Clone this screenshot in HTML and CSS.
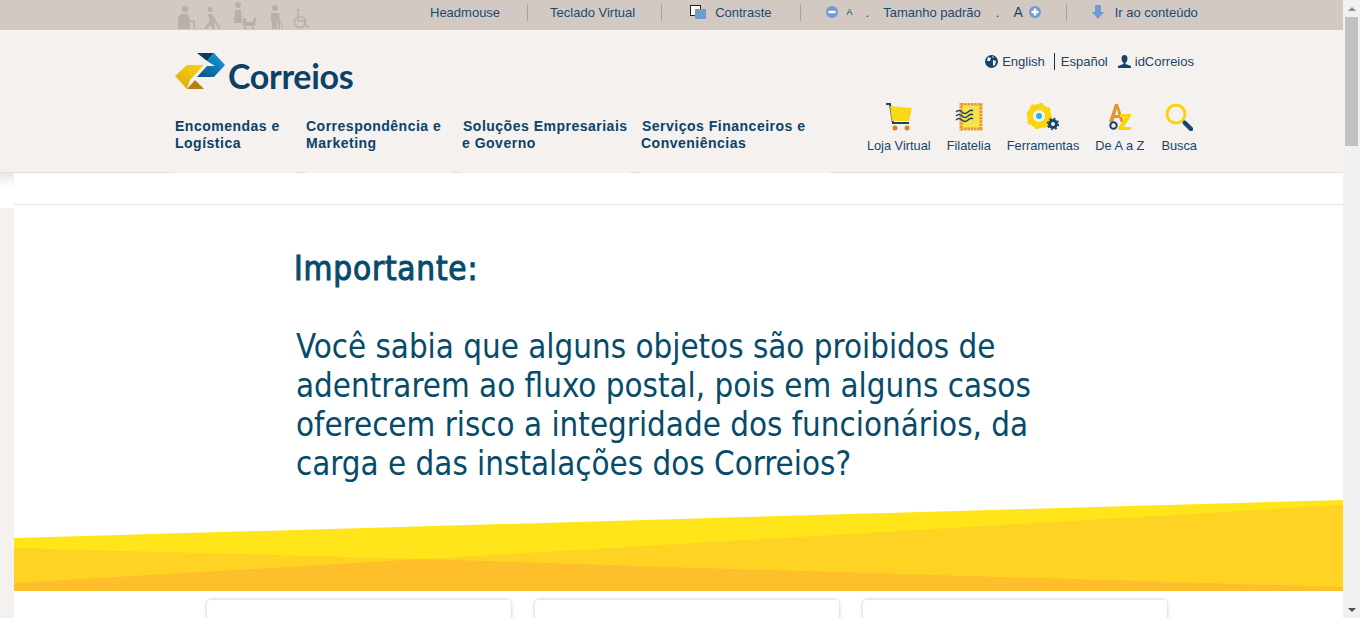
FILE: index.html
```html
<!DOCTYPE html>
<html lang="pt-BR">

<head>
    <meta charset="utf-8">
    <title>Correios</title>
    <link rel="stylesheet" href="styles.css">
</head>

<body>
    <div id="page">
        <div class="access-bar">
            <div class="access-people">
                <svg width="136" height="30" viewBox="0 0 136 30" fill="#b9b0a9">
                    <circle cx="9" cy="9" r="3.2"/>
                    <path d="M2 29v-9q0-6 6-6.500 5 0 5.500 5l1 2h4l1 8.500h-1.500l-1-7h-3v7z"/>
                    <circle cx="34" cy="9.500" r="2.500"/>
                    <path d="M32 14h4l9 15h-2l-5-7.500 1 7.500h-3l-1.500-4-3.500 4h-3l5.500-8z"/>
                    <circle cx="62" cy="5" r="3"/>
                    <path d="M59 10h6l1 13h-8z"/>
                    <path d="M67 18h3v4h7q1-6 3-4l-1 8h-12z"/>
                    <circle cx="69" cy="28" r="1.500"/>
                    <circle cx="77" cy="28" r="1.500"/>
                    <circle cx="99" cy="8" r="3"/>
                    <path d="M95 13h8l1 8v8h-2v-7h-1v7h-5v-7h-1v-1z"/>
                    <path d="M104 20h1l2 9h-1z"/>
                    <g fill="none" stroke="#b9b0a9" stroke-width="1.600">
                        <circle cx="124" cy="22" r="5.500"/>
                        <path d="M122 12v9h6l3 6h2"/>
                    </g>
                    <circle cx="122" cy="10" r="1.600"/>
                </svg>
            </div>
            <a class="access-link">Headmouse</a>
            <span class="sep sep-a"></span>
            <a class="access-link">Teclado Virtual</a>
            <span class="sep sep-b"></span>
            <span class="contrast-icon"></span>
            <a class="access-link">Contraste</a>
            <span class="sep sep-c"></span>
            <svg class="round-icon" width="12" height="12" viewBox="0 0 12 12">
                <circle cx="6" cy="6" r="6" fill="#6f9bd1"/>
                <rect x="2.500" y="4.800" width="7" height="2.400" fill="#fff"/>
            </svg>
            <span class="font-small">A</span>
            <span class="font-dot">.</span>
            <a class="access-link">Tamanho padrão</a>
            <span class="font-dot dot-b">.</span>
            <span class="font-big">A</span>
            <svg class="round-icon" width="12" height="12" viewBox="0 0 12 12">
                <circle cx="6" cy="6" r="6" fill="#6f9bd1"/>
                <path d="M2.500 4.800h2.300v-2.300h2.400v2.300h2.300v2.400h-2.300v2.300h-2.400v-2.300h-2.300z" fill="#fff"/>
            </svg>
            <span class="sep sep-d"></span>
            <svg class="skip-icon" width="12" height="14" viewBox="0 0 12 14">
                <path d="M3 0h6v7h3l-6 7-6-7h3z" fill="#6f9bd1"/>
            </svg>
            <a class="access-link">Ir ao conteúdo</a>
        </div>

        <header class="site-header">
            <div class="header-top">
                <div class="logo">
                    <svg width="52" height="38" viewBox="0 0 52 38">
                        <defs>
                            <linearGradient id="lg-blue" x1="0" y1="1" x2="1" y2="0">
                                <stop offset="0" stop-color="#0a4f7f"/>
                                <stop offset="1" stop-color="#12a5e4"/>
                            </linearGradient>
                            <linearGradient id="lg-gold" x1="0" y1="1" x2="1" y2="0">
                                <stop offset="0" stop-color="#dca60f"/>
                                <stop offset="1" stop-color="#fbd80a"/>
                            </linearGradient>
                        </defs>
                        <path d="M22 0h17l-7 8z" fill="#0b3c66"/>
                        <path d="M39 0l11 12-11 12H22l10-11h8l-8-5z" fill="url(#lg-blue)"/>
                        <path d="M0 23L12 12H29L15 27l-3 9z" fill="url(#lg-gold)"/>
                        <path d="M20 27l9 9H12z" fill="#b97d17"/>
                    </svg>
                    <span class="logo-word">Correios</span>
                </div>
                <div class="lang-links">
                    <svg width="13" height="13" viewBox="0 0 13 13">
                        <circle cx="6.500" cy="6.500" r="6.500" fill="#16456b"/>
                        <path d="M3 2l3 1-1 3-3 0zM8 5l3 1-1 4-2 1zM7 1l2 1-1 1z" fill="#f5f1ee"/>
                    </svg>
                    <a class="lang-text">English</a>
                    <span class="lang-sep"></span>
                    <a class="lang-text">Español</a>
                    <svg class="user-icon" width="13" height="13" viewBox="0 0 13 13">
                        <path d="M6.500 0q3 0 3 3.500t-2 4.500v1l5.500 2v2h-13v-2l5.500-2v-1q-2-1-2-4.500t3-3.500z" fill="#16456b"/>
                    </svg>
                    <a class="lang-text">idCorreios</a>
                </div>
            </div>
            <div class="header-bottom">
                <nav class="main-nav">
                    <a class="nav-item nav-1">Encomendas e<br>Logística</a>
                    <a class="nav-item nav-2">Correspondência e<br>Marketing</a>
                    <a class="nav-item nav-3"><span class="nudge">Soluções Empresariais</span><br>e Governo</a>
                    <a class="nav-item nav-4"><span class="nudge">Serviços Financeiros e</span><br>Conveniências</a>
                </nav>
                <div class="tools">
                    <a class="tool">
                        <svg width="28" height="28" viewBox="0 0 28 28">
                            <path d="M1 1h4l3 19h16" fill="none" stroke="#16456b" stroke-width="2"/>
                            <path d="M5 3l22 2-3 13-17 0z" fill="#fbd716"/>
                            <circle cx="10" cy="25" r="2.500" fill="#de7f27"/>
                            <circle cx="22" cy="25" r="2.500" fill="#de7f27"/>
                        </svg>
                        <span>Loja Virtual</span>
                    </a>
                    <a class="tool">
                        <svg width="28" height="28" viewBox="0 0 28 28">
                            <rect x="6" y="1" width="20" height="25" fill="#fbe04a" stroke="#e39a2e" stroke-width="3" stroke-dasharray="2.500 .8"/>
                            <path d="M1 9q3-3 6 0t6 0 5-1M1 13q3-3 6 0t6 0 5-1M1 17q3-3 6 0t6 0 5-1" fill="none" stroke="#16456b" stroke-width="1.500"/>
                        </svg>
                        <span>Filatelia</span>
                    </a>
                    <a class="tool">
                        <svg width="32" height="28" viewBox="0 0 32 28">
                            <circle cx="12" cy="13" r="9" fill="none" stroke="#fbd30f" stroke-width="6"/>
                            <circle cx="12" cy="13" r="12" fill="none" stroke="#fbd30f" stroke-width="2.500" stroke-dasharray="4 5.400"/>
                            <circle cx="12" cy="13" r="3" fill="#22b5ea"/>
                            <circle cx="26" cy="21" r="3.500" fill="none" stroke="#16456b" stroke-width="3"/>
                            <circle cx="26" cy="21" r="5.500" fill="none" stroke="#16456b" stroke-width="1.500" stroke-dasharray="2 2.300"/>
                        </svg>
                        <span>Ferramentas</span>
                    </a>
                    <a class="tool">
                        <svg width="28" height="28" viewBox="0 0 28 28">
                            <path d="M3 19L9 1h3l6 18h-3.500l-1.200-4h-5l-1.200 4zM9.200 12h3.300L10.800 6z" fill="#de9630"/>
                            <path d="M14 11h11v2l-7 11h7v3H12v-2l7-11h-5z" fill="#fbd30f"/>
                            <circle cx="7.500" cy="22.500" r="3.200" fill="none" stroke="#16456b" stroke-width="2"/>
                        </svg>
                        <span>De A a Z</span>
                    </a>
                    <a class="tool tool-last">
                        <svg width="28" height="28" viewBox="0 0 28 28">
                            <circle cx="11" cy="11" r="9" fill="none" stroke="#fbd30f" stroke-width="3"/>
                            <path d="M18 18l2 2" stroke="#22b5ea" stroke-width="3"/>
                            <path d="M20 20l6 6" stroke="#16456b" stroke-width="4.500" stroke-linecap="round"/>
                        </svg>
                        <span>Busca</span>
                    </a>
                </div>
            </div>
        </header>

        <div class="under-header">
            <div class="under-strip"></div>
            <div class="under-main"></div>
        </div>

        <div class="content-wrap">
            <main class="content">
                <h1>Importante:</h1>
                <p>Você sabia que alguns objetos são proibidos de<br>adentrarem ao fluxo postal, pois em alguns casos<br>oferecem risco a integridade dos funcionários, da<br>carga e das instalações dos Correios?</p>

                <svg class="band" width="1329" height="92" viewBox="0 0 1329 92" preserveAspectRatio="none">
                    <polygon points="0,38 1329,0 1329,91 0,91" fill="#ffe51a"/>
                    <polygon points="0,48 410,59 1329,5 1329,91 0,91" fill="#ffd324"/>
                    <polygon points="0,83 410,59 686,68 1329,87 1329,91 0,91" fill="#ffbf2a"/>
                </svg>

                <div class="cards">
                    <div class="card"></div>
                    <div class="card"></div>
                    <div class="card"></div>
                </div>
            </main>
        </div>
    </div>

    <div class="scrollbar">
        <span class="arrow-up"></span>
        <span class="thumb"></span>
        <span class="arrow-down"></span>
    </div>
</body>

</html>
```
FILE: styles.css
```css
html,
body {
    margin: 0;
    padding: 0;
    height: 100%;
    overflow: hidden;
}

body {
    display: flex;
    font-family: "Liberation Sans", Arial, sans-serif;
    font-size: 13px;
    color: #16456b;
    background: #f5f1ee;
}

#page {
    flex: 1;
    min-width: 0;
    display: flex;
    flex-direction: column;
}

.access-bar {
    height: 30px;
    flex: none;
    box-sizing: border-box;
    padding: 0 0 6px 176px;
    display: flex;
    align-items: center;
    background: #d2c9c3;
    white-space: nowrap;
}

.access-people {
    height: 30px;
    width: 136px;
    margin-right: 118px;
    align-self: flex-start;

    & svg {
        display: block;
    }
}

.access-link {
    color: #1b4a70;
}

.sep {
    width: 1px;
    height: 17px;
    background: #aaa39d;
}

.sep-a {
    margin: 0 22px 0 27px;
}

.sep-b {
    margin: 0 28px 0 26px;
}

.sep-c {
    margin: 0 25px 0 28px;
}

.sep-d {
    margin: 0 25px;
}

.contrast-icon {
    width: 16px;
    height: 14px;
    margin-right: 9px;
    background:
        linear-gradient(#6f9bd1, #6f9bd1) 5px 4px / 11px 10px no-repeat,
        linear-gradient(#fff, #fff) 1px 1px / 9px 9px no-repeat,
        linear-gradient(#222, #222) 0 0 / 11px 11px no-repeat;
}

.font-small {
    font-size: 9px;
    margin: 0 0 0 9px;
}

.font-dot {
    margin: 0 14px 0 13px;
}

.dot-b {
    margin: 0 14px 0 15px;
}

.font-big {
    font-size: 14px;
    margin-right: 6px;
}

.skip-icon {
    margin-right: 11px;
}

.site-header {
    height: 143px;
    flex: none;
    box-sizing: border-box;
    padding: 0 146px 0 175px;
    display: flex;
    flex-direction: column;
    background: #f5f1ee;
    border-bottom: 1px solid #e0e0e0;
}

.header-top {
    height: 72px;
    flex: none;
    display: flex;
    justify-content: space-between;
    align-items: flex-start;
}

.logo {
    display: flex;
    align-items: flex-end;
    margin-top: 23px;
    height: 38px;
    gap: 1px;
}

.logo-word {
    font-family: Lato, sans-serif;
    font-weight: 700;
    font-size: 34px;
    line-height: 34px;
    letter-spacing: -0.3px;
    color: #0b4268;
    position: relative;
    top: 2px;
}

.lang-links {
    display: flex;
    align-items: center;
    margin: 23px 3px 0 0;
    height: 17px;
}

.lang-text {
    margin-left: 4px;
}

.lang-sep {
    width: 1px;
    height: 17px;
    background: #16304a;
    margin: 0 2px 0 9px;
}

.user-icon {
    margin-left: 10px;
}

.header-bottom {
    flex: 1;
    display: flex;
    justify-content: space-between;
}

.main-nav {
    display: flex;
    gap: 10px;
    font-size: 14px;
    line-height: 17px;
    font-weight: 700;
    letter-spacing: 0.5px;
    white-space: nowrap;
    color: #0b4268;
}

.nav-item {
    padding-top: 16px;
    margin-bottom: -1px;
    background: #f5f1ee;
}

.nudge {
    margin-left: 1px;
}

.nav-1 {
    width: 121px;
}

.nav-2 {
    width: 146px;
}

.nav-3 {
    width: 168px;
    margin-right: 1px;
}

.nav-4 {
    width: 189px;
}

.tools {
    display: flex;
    gap: 16px;
    padding-top: 1px;
    font-size: 12.8px;
}

.tool {
    display: flex;
    flex-direction: column;
    align-items: center;
    gap: 7px;

    & svg {
        display: block;
    }
}

.tool-last {
    margin-left: 1px;
}

.under-header {
    height: 32px;
    flex: none;
    display: flex;
}

.under-strip {
    width: 14px;
    height: 35px;
    background: linear-gradient(#e8e8e8, #fff 14px);
}

.under-main {
    flex: 1;
    background: #fff;
    border-bottom: 1px solid #e4e4e4;
}

.content-wrap {
    flex: 1;
    min-height: 0;
    margin-left: 14px;
    background: #fff;
}

.content {
    display: flex;
    flex-direction: column;
    height: 100%;
    color: #064b6a;
    font-family: "DejaVu Sans Condensed", "DejaVu Sans", sans-serif;
}

h1 {
    margin: 42px 0 0 280px;
    font-size: 33px;
    line-height: 44px;
    font-weight: 400;
    letter-spacing: 0.8px;
    -webkit-text-stroke: 1px #064b6a;
}

p {
    margin: 37px 0 0 282px;
    font-size: 32.8px;
    line-height: 39px;
}

.band {
    display: block;
    flex: none;
    margin-top: 16px;
}

.cards {
    display: flex;
    gap: 24px;
    margin: 8px 0 0 193px;
}

.card {
    width: 304px;
    height: 60px;
    border-radius: 4px;
    background: #fff;
    box-shadow: 0 0 4px rgba(0, 0, 0, 0.22);
}

.scrollbar {
    width: 17px;
    flex: none;
    position: relative;
    background: #f1f1f1;
}

.thumb {
    position: absolute;
    left: 2px;
    top: 17px;
    width: 13px;
    height: 129px;
    background: #c1c1c1;
}

.arrow-up,
.arrow-down {
    position: absolute;
    left: 5px;
    width: 0;
    height: 0;
    border-left: 4px solid transparent;
    border-right: 4px solid transparent;
}

.arrow-up {
    top: 7px;
    border-bottom: 4px solid #8e8e8e;
}

.arrow-down {
    bottom: 6px;
    border-top: 4px solid #505050;
}
```
